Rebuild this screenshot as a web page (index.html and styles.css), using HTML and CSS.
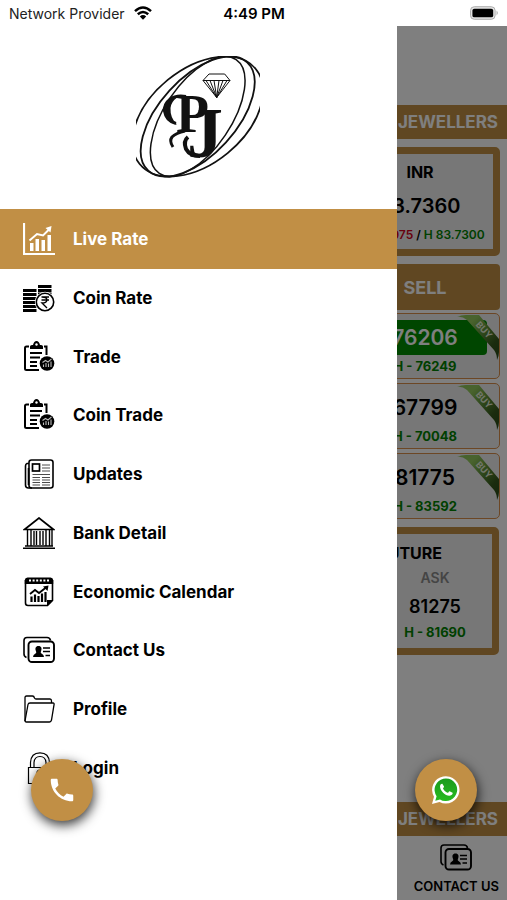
FILE: index.html
```
<!DOCTYPE html>
<html lang="en">
<head>
<meta charset="utf-8">
<meta name="viewport" content="width=device-width, initial-scale=1">
<title>PJ Jewellers</title>
<link rel="stylesheet" href="styles.css">
</head>
<body>
<svg class="defs" aria-hidden="true">
  <defs>
    <linearGradient id="ribbonFill" x1="0" y1="0" x2="1" y2="1">
      <stop offset="0" stop-color="#8fc45a"/><stop offset=".25" stop-color="#93c75c"/><stop offset=".5" stop-color="#5f9138"/><stop offset=".75" stop-color="#36591c"/><stop offset="1" stop-color="#2a4a16"/>
    </linearGradient>
    <symbol id="ribbon" viewBox="0 0 42 46">
      <path d="M0 2Q4 0 9 0H22L42 24V37Q42 41 40 45Q40 39 37 35L10 5Q5 1 0 2Z" fill="url(#ribbonFill)"/>
      <text x="27" y="18" transform="rotate(48 27 15)" text-anchor="middle" class="ribbon-text">BUY</text>
    </symbol>
    <symbol id="clip" viewBox="0 0 32 32">
      <path d="M6 5.500H3.500Q2 5.500 2 7V27.500Q2 29 3.500 29H16M21 5.500H23.500V14" fill="none" stroke="currentColor" stroke-width="2"/>
      <path d="M7 8V5.500Q7 4 9 4H10Q11 0 13.500 0T17 4H18Q20 4 20 5.500V8Z" fill="currentColor"/>
      <circle cx="13.500" cy="3.500" r="1.200" fill="#fff"/>
      <path d="M7 12H19M7 16.500H17M7 21H14M7 25H14" stroke="currentColor" stroke-width="1.800" fill="none"/>
      <circle cx="24" cy="22.500" r="8.200" fill="#fff"/>
      <circle cx="24" cy="22.500" r="7.300" fill="currentColor"/>
      <path d="M20.500 26V23.500M23 26V22M25.500 26V22.500M28 26V20.500M19.500 21.500L22.500 19.500L25 21L28.500 17.800" stroke="#bbb" stroke-width="1.100" fill="none"/>
    </symbol>
    <symbol id="contact" viewBox="0 0 32 27">
      <path d="M3.500 21Q1 20 1 17.500V4Q1 1 4 1H24Q27 1 27.500 4" fill="none" stroke="currentColor" stroke-width="1.600"/>
      <rect x="5.500" y="5" width="25.500" height="20.500" rx="3.500" fill="none" stroke="currentColor" stroke-width="1.900"/>
      <path d="M15.500 9.500C18.500 9.500 19 12 18.200 14.200C17.600 15.500 17.500 16.500 18.500 17Q21 18 21 20.500H10Q10 18 12.500 17C13.500 16.500 13.400 15.500 12.800 14.200C12 12 12.500 9.500 15.500 9.500Z" fill="currentColor"/>
      <path d="M20 11.500H27M20 15H27M22.500 19H27" stroke="currentColor" stroke-width="1.500"/>
    </symbol>
  </defs>
</svg>

<div class="app">
  <header class="status">
    <span class="carrier">Network Provider
      <svg class="wifi" viewBox="0 0 18 14" aria-hidden="true"><g fill="none" stroke="#000" stroke-width="2.500"><path d="M1 5.200Q9-2.200 17 5.200"/><path d="M3.800 8.300Q9 3.600 14.200 8.300"/></g><path d="M5.800 10.400Q9 7.700 12.200 10.400L9 13.800Z"/></svg>
    </span>
    <time class="clock">4:49 PM</time>
    <svg class="battery" viewBox="0 0 30 14" aria-label="Battery full"><rect x=".5" y=".5" width="25.500" height="13" rx="4" fill="#e4e4e4" stroke="#aaa"/><rect x="2.500" y="2.500" width="21.500" height="9" rx="2" fill="#000"/><path d="M27.500 4.500Q30 7 27.500 9.500Z" fill="#aaa"/></svg>
  </header>

  <div class="stage">
    <main class="rates">
      <h1 class="band top">PJ JEWELLERS</h1>
      <div class="cards">
        <section class="frame inr">
          <h2>INR</h2>
          <strong class="price">83.7360</strong>
          <p class="range"><span class="low">L 83.6975</span> / <span class="high">H 83.7300</span></p>
        </section>
        <div class="sell">SELL</div>
        <ul class="quotes">
          <li class="quote up"><strong class="price">76206</strong><span class="high">H - 76249</span><svg class="ribbon"><use href="#ribbon"/></svg></li>
          <li class="quote"><strong class="price">67799</strong><span class="high">H - 70048</span><svg class="ribbon"><use href="#ribbon"/></svg></li>
          <li class="quote"><strong class="price">81775</strong><span class="high">H - 83592</span><svg class="ribbon"><use href="#ribbon"/></svg></li>
        </ul>
        <section class="frame future">
          <h2>FUTURE</h2>
          <div class="ask">
            <span class="label">ASK</span>
            <strong>81275</strong>
            <span class="high">H - 81690</span>
          </div>
        </section>
      </div>
      <div class="band bottom">PJ JEWELLERS</div>
      <nav class="tabs"><a class="tab" href="#contact-us"><svg><use href="#contact"/></svg>CONTACT US</a></nav>
    </main>

    <div class="scrim"></div>

    <aside class="drawer">
      <svg class="logo" viewBox="0 0 124 124" role="img" aria-label="PJ logo">
        <g fill="none" stroke="#111">
          <ellipse cx="61.700" cy="60.500" rx="68.700" ry="33.300" transform="rotate(-56 61.700 60.500)" stroke-width="1.500"/>
          <ellipse cx="61.700" cy="60.500" rx="73.300" ry="38.300" transform="rotate(-47.600 61.700 60.500)" stroke-width="1.800"/>
          <ellipse cx="61.700" cy="60.500" rx="75" ry="47.300" transform="rotate(-39.300 61.700 60.500)" stroke-width="1.800"/>
          <path d="M67 24.500L73 18H88.700L94 24.500L80.700 41.500ZM67 24.500H94M70 24.500L80.700 41.500M74 24.500L80.700 41.500M78 24.500L80.700 41.500M83 24.500L80.700 41.500M87 24.500L80.700 41.500M91 24.500L80.700 41.500" stroke-width="1"/>
          <path d="M50 40.500C36 38 28 46 28.500 55Q30 65 40 67.500" stroke-width="3"/>
          <path d="M27.500 52Q28 66 41 68.500Q34 62 34.500 52Q35 46 41 41.500Q29 43 27.500 52Z" fill="#111" stroke="none"/>
          <path d="M49 75Q40 77 36 81Q33 85 37 91" stroke-width="3"/>
          <path d="M52 81Q47 85 50 93Q54 100 64 100" stroke-width="4"/>
        </g>
        <text class="logo-p" x="40" y="76">P</text>
        <text class="logo-j" x="51" y="101">J</text>
      </svg>
      <nav>
        <ul class="menu">
          <li><a class="active" href="#live-rate"><svg viewBox="0 0 32 32"><path d="M1 0V31H32" fill="none" stroke="currentColor" stroke-width="2.200"/><path d="M7 20H10.500V28H7ZM12.500 16H16V28H12.500ZM18.500 17H22V28H18.500ZM24.500 12H28V28H24.500Z" fill="currentColor"/><path d="M6.500 17.500L14 11L20 12.500L26 6.500" fill="none" stroke="currentColor" stroke-width="2"/><path d="M22.500 5L28.500 3L27.500 9.500Z" fill="currentColor"/></svg>Live Rate</a></li>
          <li><a href="#coin-rate"><svg viewBox="0 0 32 32"><path d="M0 8.500H13.500M0 12.500H13.500M0 16.500H13.500M0 20.500H13.500M0 24.500H13.500M0 28.500H13.500M15 4.500H28.500M15 8.500H28.500M15 12H28.500" stroke="currentColor" stroke-width="3"/><circle cx="22" cy="20" r="10.200" fill="#fff"/><circle cx="22" cy="20" r="8.700" fill="none" stroke="currentColor" stroke-width="1.600"/><path d="M18.500 15H26M18.500 18H26M19 15C25.500 15 25.500 21 19 21L24 26" fill="none" stroke="currentColor" stroke-width="1.400"/></svg>Coin Rate</a></li>
          <li><a href="#trade"><svg><use href="#clip"/></svg>Trade</a></li>
          <li><a href="#coin-trade"><svg><use href="#clip"/></svg>Coin Trade</a></li>
          <li><a href="#updates"><svg viewBox="0 0 32 32"><rect x="6" y="2" width="24" height="28" rx="2.500" fill="none" stroke="currentColor" stroke-width="1.600"/><path d="M6 5.500H4Q2.500 6 2.500 8V27Q2.500 30 5.500 30H9M5.500 10V27" fill="none" stroke="currentColor" stroke-width="1.600"/><rect x="9.500" y="6" width="7" height="7" fill="none" stroke="currentColor" stroke-width="1.700"/><path d="M19 7H27M19 10H27M19 13H27M9.500 16.500H27M9.500 19.500H17M19 19.500H27M9.500 22H17M19 22H27M9.500 24.500H17M19 24.500H27M9.500 27H17M19 27H27" stroke="currentColor" stroke-width="1" opacity=".7"/></svg>Updates</a></li>
          <li><a href="#bank-detail"><svg viewBox="0 0 32 32"><path d="M1.500 12.500L16 1L30.500 12.500Z" fill="none" stroke="currentColor" stroke-width="1.700"/><path d="M4.500 13V29M8 13V29M11 14V28M13.500 14V28M17 14V28M20 14V28M23 13V29M26.500 13V29M29 13V29" stroke="currentColor" stroke-width="1.400"/><path d="M2 29H30M0 31.200H32" stroke="currentColor" stroke-width="1.500"/></svg>Bank Detail</a></li>
          <li><a href="#economic-calendar"><svg viewBox="0 0 32 32"><path d="M2.500 4V27Q2.500 29.500 5 29.500H24.500L29.500 24.500V4" fill="none" stroke="currentColor" stroke-width="1.600"/><path d="M1.800 8V4Q2 1.500 4.500 1.500H27.500Q30 1.500 30.200 4V8ZM24 30V24H30Z" fill="currentColor"/><path d="M6 4.500H26" stroke="#fff" stroke-width="2.200" stroke-dasharray="2 1.600"/><path d="M8.500 26V20.500M12 26V18.500M15.500 26V20M19 26V17.500M22.500 26V16" stroke="currentColor" stroke-width="2.200"/><path d="M7 18L12 14L16 17L23 11.500" fill="none" stroke="currentColor" stroke-width="1.800"/><path d="M20 10.500L25.500 9.500L24.500 15Z" fill="currentColor"/></svg>Economic Calendar</a></li>
          <li><a href="#contact-us"><svg><use href="#contact"/></svg>Contact Us</a></li>
          <li><a href="#profile"><svg viewBox="0 0 32 32"><path d="M2 28V4.500Q2 3 3.500 3H9.500Q11 3 11.500 5Q12 6 13 6H27Q28.500 6 28.500 8V10" fill="none" stroke="currentColor" stroke-width="1.300"/><path d="M2 28L5 11.500Q5.300 10 7 10H30Q31.500 10 31 12L28.500 27Q28 29 26.500 29H3.500Q1.800 29 2 27Z" fill="none" stroke="currentColor" stroke-width="1.300"/></svg>Profile</a></li>
          <li><a href="#login"><svg viewBox="0 0 32 32"><g fill="none" stroke="currentColor" stroke-width="1.200"><path d="M5.500 15.500H28V31.500H5.500ZM7.500 15V10.500Q8 .8 17 .8T26.500 10.500V15M11 15V10.500Q11.500 4.500 17 4.500T23 10.500V15"/><circle cx="17" cy="21" r="3"/></g></svg>Login</a></li>
        </ul>
      </nav>
    </aside>

    <button class="fab call" type="button" aria-label="Call"><svg viewBox="0 0 24 24"><path d="M6.600 10.800c1.400 2.800 3.800 5.100 6.600 6.600l2.200-2.200c.3-.3.700-.4 1-.2 1.100.4 2.300.6 3.600.6.600 0 1 .4 1 1V20c0 .6-.4 1-1 1C10.600 21 3 13.400 3 4c0-.6.500-1 1-1h3.500c.6 0 1 .4 1 1 0 1.300.2 2.500.6 3.600.1.300 0 .7-.2 1z" fill="#fff"/></svg></button>
    <button class="fab chat" type="button" aria-label="WhatsApp"><svg viewBox="0 0 28 28"><path d="M0 28L2 20.800A13.700 13.700 0 1 1 7.500 26Z" fill="#fff"/><path d="M3.300 24.700L4.600 20.200A11.300 11.300 0 1 1 8 23.400Z" fill="url(#waFill)"/><path d="M10.500 8C9.800 7.500 8.200 8.300 8 10.300C8 15 13.500 20 17.500 19.800C20 19.500 21 18 20.600 16.800L17.500 15.200C16.700 15.500 16.300 17 15.500 16.800C13.500 16 11.800 14.300 11 12.600C11.200 11.800 12.200 11.300 12 10.600Z" fill="#fff"/><defs><linearGradient id="waFill" x1="0" y1="0" x2="0" y2="1"><stop offset="0" stop-color="#1b9a1d"/><stop offset="1" stop-color="#27bb20"/></linearGradient></defs></svg></button>
  </div>
</div>
</body>
</html>
```

FILE: styles.css
```
* { box-sizing: border-box; margin: 0; padding: 0; }
:root { --gold: #c18f45; --green: #008000; }
body { font-family: Inter, "Liberation Sans", sans-serif; background: #fff; color: #000; }
ul { list-style: none; }
a { color: inherit; text-decoration: none; }
svg { display: block; }
.defs { position: absolute; width: 0; height: 0; }

.app { display: flex; flex-direction: column; min-height: 100vh; overflow: hidden; }
.status { display: grid; grid-template-columns: 1fr auto 1fr; align-items: center; height: 26px; padding: 0 8px 0 9px; font-size: 14px; }
.carrier { display: flex; align-items: center; gap: 9px; color: #222; }
.wifi { width: 18px; height: 14px; }
.clock { font-size: 15px; font-weight: 600; }
.battery { width: 29px; height: 14px; justify-self: end; }

.stage { position: relative; flex: 1; display: flex; }
.rates { flex: 1; display: flex; flex-direction: column; padding-top: 79px; }
.band { display: flex; align-items: center; justify-content: flex-end; height: 34px; padding-right: 9px; background: var(--gold); color: #fff; font-size: 17px; font-weight: 700; line-height: 20px; }
.cards { flex: 1; display: flex; flex-direction: column; align-items: flex-end; gap: 8px; padding: 8px 7px; }
.frame { border: 7px solid var(--gold); border-radius: 5px; background: #eee; }
.frame h2 { font-size: 16px; font-weight: 700; line-height: 20px; }
.low { color: #d0021b; }
.high { color: var(--green); font-weight: 700; }
.price { font-size: 21px; font-weight: 600; line-height: 28px; }
.inr { display: flex; flex-direction: column; align-items: center; width: 160px; height: 109px; padding-top: 8px; }
.inr .price { margin-top: 10px; font-size: 20px; }
.range { margin-top: 8px; font-size: 12px; font-weight: 600; line-height: 14px; white-space: nowrap; }
.range .high { font-weight: 600; }
.sell { display: grid; place-items: center; width: 150px; height: 46px; border-radius: 4px; background: var(--gold); color: #fff; font-size: 18px; font-weight: 700; }
.quotes { display: grid; gap: 4px; margin-top: -5px; }
.quote { position: relative; display: flex; flex-direction: column; align-items: center; width: 150px; height: 66px; padding-top: 6px; border: 1px solid #d98f4a; border-radius: 5px; background: #eee; }
.quote .price { display: grid; place-items: center; width: 124px; height: 35px; border-radius: 4px; }
.quote .high { margin-top: 3px; font-size: 13px; line-height: 16px; }
.up .price { background: #008c00; color: #fff; }
.ribbon { position: absolute; top: 1px; right: 0; width: 42px; height: 46px; }
.ribbon-text { font-family: Inter, sans-serif; font-size: 9px; font-weight: 700; fill: #e4ecd8; }
.future { display: flex; flex-direction: column; align-items: flex-end; width: 160px; height: 128px; margin-right: 1px; padding-top: 9px; }
.future h2 { padding-right: 50px; }
.ask { display: flex; flex-direction: column; align-items: center; width: 114px; padding-top: 7px; font-size: 13px; line-height: 16px; }
.ask .label { font-size: 14px; font-weight: 600; color: #8a8a8a; }
.ask strong { margin: 10px 0 6px; font-size: 18px; font-weight: 600; line-height: 22px; }
.tabs { display: flex; justify-content: flex-end; height: 64px; padding-right: 8px; }
.tab { display: flex; flex-direction: column; align-items: center; padding-top: 8px; font-size: 13px; font-weight: 600; line-height: 16px; }
.tab svg { width: 32px; height: 27px; margin-bottom: 7px; }

.scrim { position: absolute; inset: 0; background: rgba(0, 0, 0, .5); }
.drawer { position: absolute; inset: 0 auto 0 0; width: 78.3%; background: #fff; }
.logo { width: 124px; height: 124px; margin: 30px auto; }
.logo-p, .logo-j { font-family: "Liberation Serif", serif; font-weight: 700; fill: #111; }
.logo-p { font-size: 54px; }
.logo-j { font-size: 72px; }
.menu { display: grid; grid-auto-rows: 1fr; height: 587px; }
.menu a { display: flex; align-items: center; gap: 18px; height: 100%; padding-left: 23px; font-size: 17px; font-weight: 700; }
.menu svg { width: 32px; height: 32px; }
.menu .active { background: var(--gold); color: #fff; box-shadow: 0 -1px 0 var(--gold); }

.fab { position: absolute; bottom: 79px; display: grid; place-items: center; width: 62px; height: 62px; border: 0; border-radius: 50%; background: var(--gold); box-shadow: 1px 4px 12px rgba(0, 0, 0, .8); }
.call { left: 31px; }
.call svg { width: 30px; height: 30px; }
.chat { right: 30px; }
.chat svg { width: 28px; height: 28px; }
```
